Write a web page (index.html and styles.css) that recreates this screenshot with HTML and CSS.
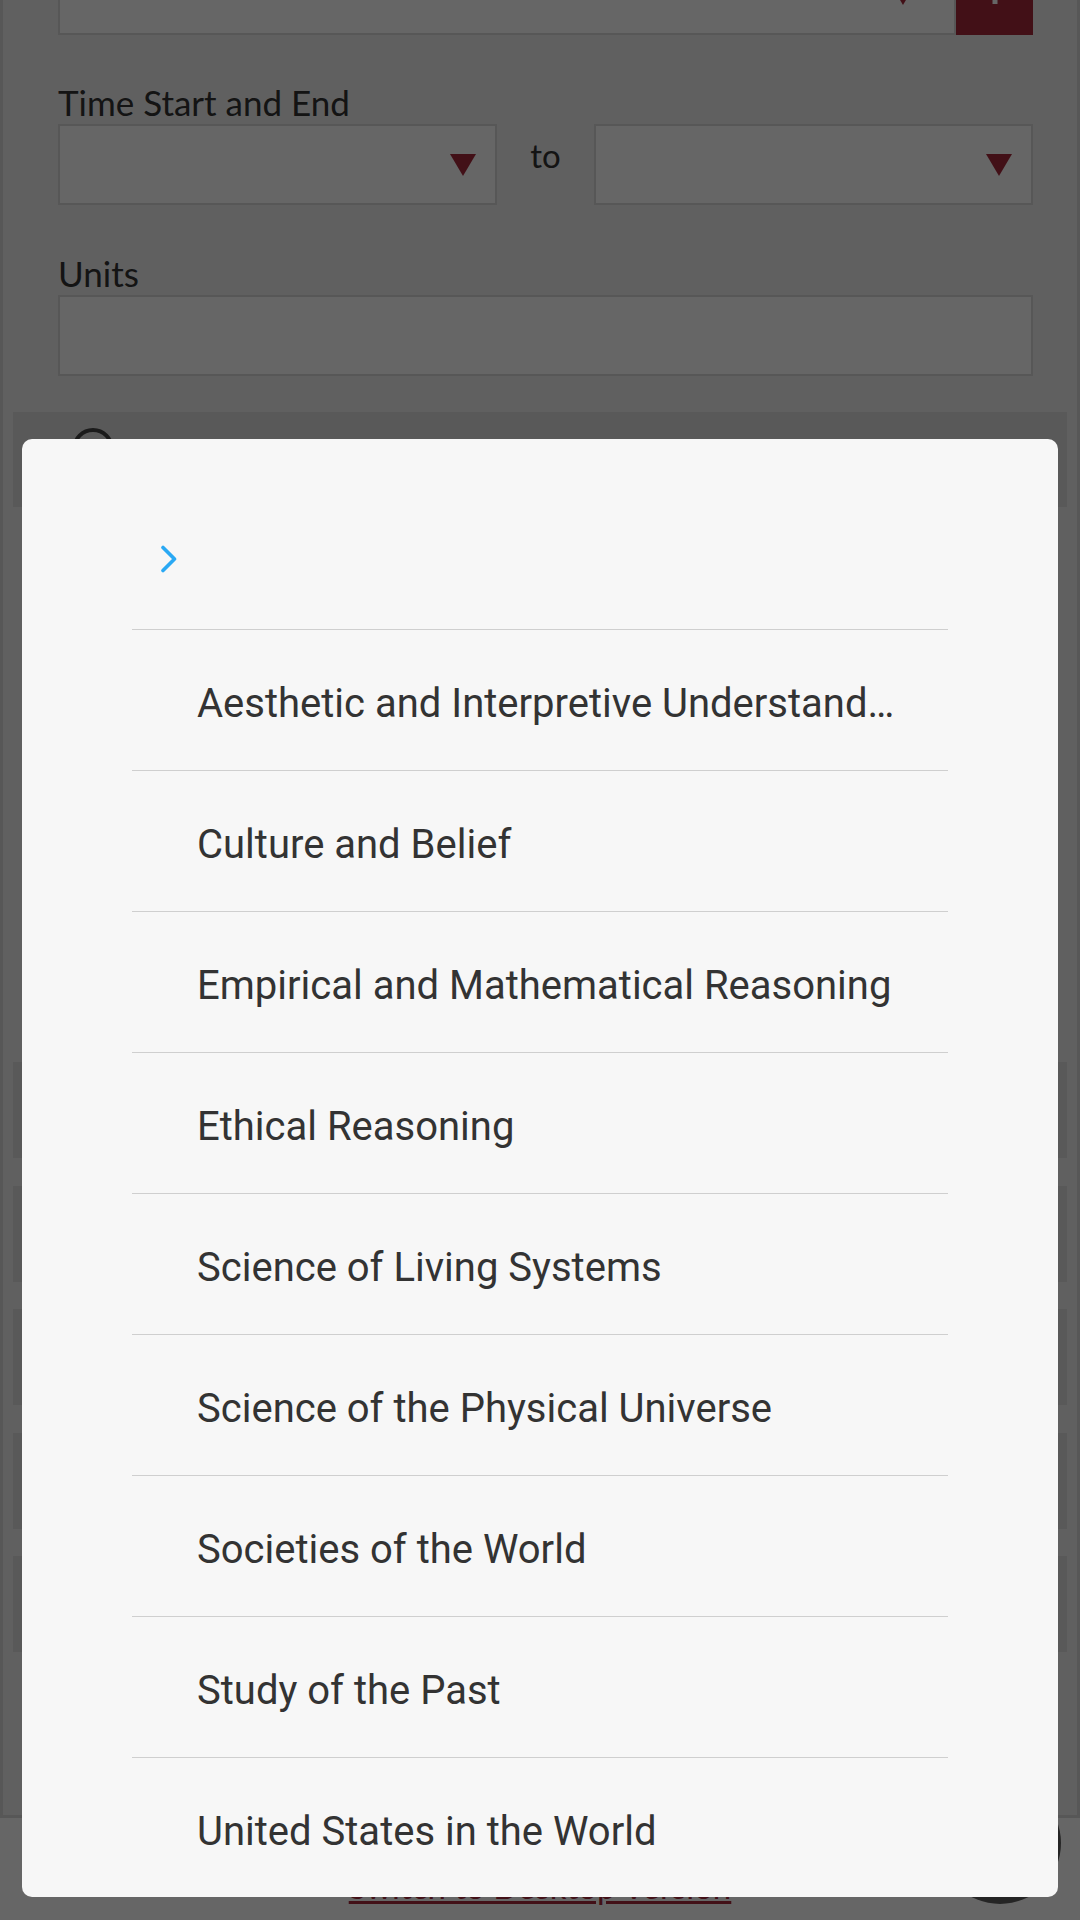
FILE: index.html
```html
<!DOCTYPE html>
<html lang="en">
<head>
    <meta charset="UTF-8">
    <meta name="viewport" content="width=device-width, initial-scale=1.0">
    <title>Course Search</title>
    <link rel="stylesheet" href="styles.css">
</head>
<body>
    <div class="page">
        <div class="form">
            <div class="field-top">
                <div class="select wide"><span class="arrow"></span></div>
                <button class="add">
                    <svg width="24" height="24" viewBox="0 0 24 24"><path d="M12 2v20M2 12h20" stroke="#fff" stroke-width="5"/></svg>
                </button>
            </div>

            <p class="label">Time Start and End</p>
            <div class="time-row">
                <div class="select"><span class="arrow"></span></div>
                <span class="to">to</span>
                <div class="select"><span class="arrow"></span></div>
            </div>

            <p class="label units">Units</p>
            <div class="input"></div>
        </div>

        <div class="results">
            <div class="results-head">
                <span class="ring"></span>
            </div>
            <div class="result-list">
                <div class="result"></div>
                <div class="result"></div>
                <div class="result"></div>
                <div class="result"></div>
                <div class="result"></div>
            </div>
        </div>
    </div>

    <div class="footer">
        <a href="#">Switch to Desktop Version</a>
    </div>
    <div class="fab"></div>

    <div class="scrim"></div>

    <div class="dialog">
        <div class="dialog-head">
            <svg width="16" height="28" viewBox="0 0 16 28"><polyline points="2,2.5 13.5,14 2,25.5" fill="none" stroke="#2aa9f4" stroke-width="3.6" stroke-linecap="round" stroke-linejoin="round"/></svg>
        </div>
        <ul class="options">
            <li>Aesthetic and Interpretive Understanding</li>
            <li>Culture and Belief</li>
            <li>Empirical and Mathematical Reasoning</li>
            <li>Ethical Reasoning</li>
            <li>Science of Living Systems</li>
            <li>Science of the Physical Universe</li>
            <li>Societies of the World</li>
            <li>Study of the Past</li>
            <li>United States in the World</li>
        </ul>
    </div>
</body>
</html>
```

FILE: styles.css
```css
body {
    margin: 0;
    padding: 0;
    background-color: #fff;
    font-family: Lato, "Open Sans", sans-serif;
    color: #333;
    overflow: hidden;
}

.page {
    margin-top: -48px;
    background-color: #f0f0f0;
    border: 3px solid #d9d9d9;
    border-top: none;
    padding-bottom: 163px;
}

.form {
    padding: 0 44px 0 55px;
}

.field-top {
    display: flex;
    height: 83px;
}

.select {
    position: relative;
    flex: 1;
    background-color: #fff;
    border: 2px solid #d9d9d9;
    box-sizing: border-box;
}

.select .arrow {
    position: absolute;
    right: 19px;
    top: 50%;
    margin-top: -11px;
    width: 0;
    height: 0;
    border-left: 13.5px solid transparent;
    border-right: 13.5px solid transparent;
    border-top: 22px solid #a52a3b;
}

.wide .arrow {
    right: 38px;
}

.add {
    width: 77px;
    border: none;
    padding: 0;
    background-color: #a52a3b;
    display: flex;
    align-items: center;
    justify-content: center;
}

.label {
    margin: 47px 0 0;
    font-size: 35px;
    line-height: 40px;
}

.label.units {
    margin-top: 48px;
}

.time-row {
    display: flex;
    height: 81px;
    margin-top: 2px;
}

.to {
    width: 97px;
    text-align: center;
    font-size: 33px;
    line-height: 40px;
    padding-top: 11px;
}

.input {
    height: 81px;
    margin-top: 2px;
    background-color: #fff;
    border: 2px solid #d9d9d9;
    box-sizing: border-box;
}

.results {
    margin: 36px 10px 0;
}

.results-head {
    height: 95px;
    background-color: #dedede;
    padding: 16px 0 0 59px;
    box-sizing: border-box;
}

.ring {
    display: block;
    width: 42px;
    height: 42px;
    border: 4px solid #444;
    border-radius: 50%;
    box-sizing: border-box;
}

.result-list {
    margin-top: 555px;
    display: flex;
    flex-direction: column;
    gap: 27.5px;
}

.result {
    height: 96px;
    background-color: #dedede;
}

.footer {
    text-align: center;
    padding-top: 48px;
    height: 54px;
}

.footer a {
    font-size: 33px;
    line-height: 40px;
    color: #a52a3b;
}

.fab {
    position: fixed;
    right: 19px;
    bottom: 16px;
    width: 122px;
    height: 122px;
    border-radius: 50%;
    background-color: #5e5e5e;
}

.scrim {
    position: fixed;
    top: 0;
    left: 0;
    right: 0;
    bottom: 0;
    background-color: rgba(0, 0, 0, 0.6);
}

.dialog {
    position: fixed;
    left: 22px;
    top: 439px;
    width: 1036px;
    height: 1458px;
    background-color: #f7f7f7;
    border-radius: 10px;
    padding: 50px 110px 0;
    box-sizing: border-box;
    overflow: hidden;
    font-family: Roboto, "Noto Sans", sans-serif;
}

.dialog-head {
    height: 140px;
    display: flex;
    align-items: center;
    padding-left: 29px;
    border-bottom: 1px solid #cfcfcf;
}

.dialog-head svg {
    display: block;
}

.options {
    list-style: none;
    margin: 0;
    padding: 0;
}

.options li {
    height: 141px;
    line-height: 132px;
    padding: 8px 52px 0 65px;
    box-sizing: border-box;
    border-bottom: 1px solid #cfcfcf;
    font-size: 40px;
    color: #333;
    white-space: nowrap;
    overflow: hidden;
    text-overflow: ellipsis;
}
```
